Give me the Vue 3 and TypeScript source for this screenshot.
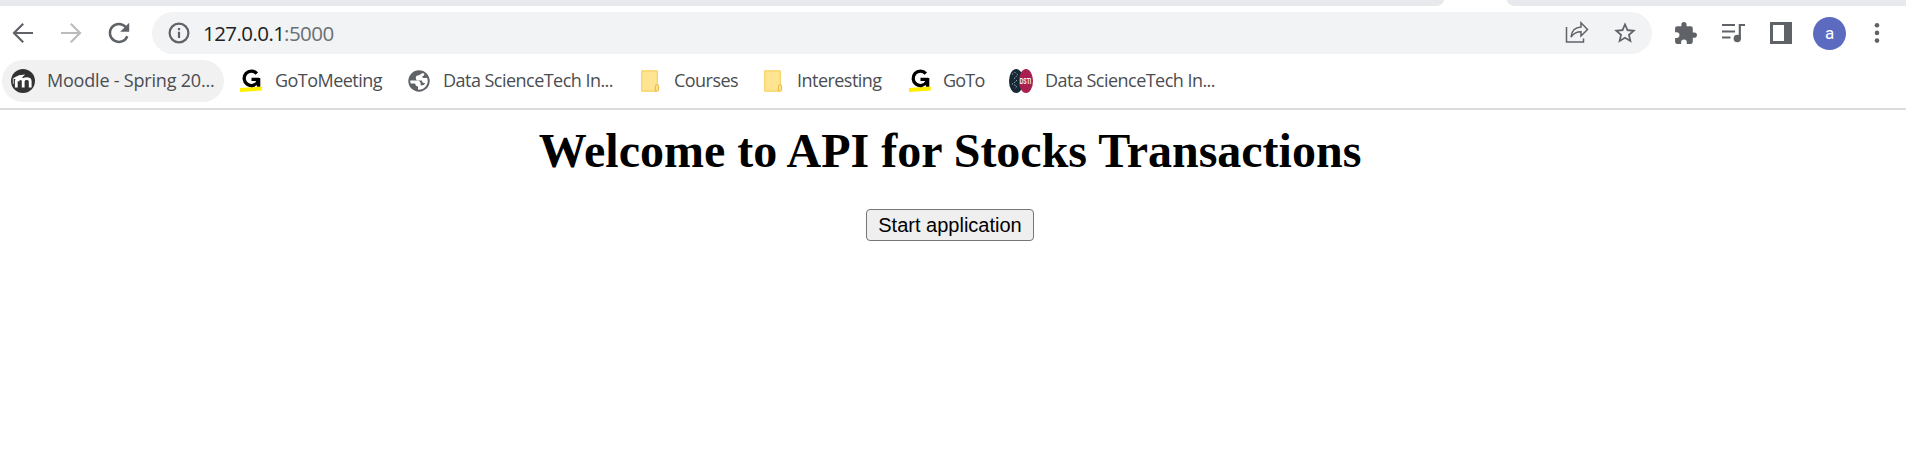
<script setup lang="ts">
interface Bookmark {
  label: string
  icon: 'moodle' | 'goto' | 'globe' | 'folder' | 'dsti'
  cls: string
}

const bookmarks: Bookmark[] = [
  { label: 'Moodle - Spring 20...', icon: 'moodle', cls: 'bm-moodle' },
  { label: 'GoToMeeting', icon: 'goto', cls: 'bm-meeting' },
  { label: 'Data ScienceTech In...', icon: 'globe', cls: 'bm-data' },
  { label: 'Courses', icon: 'folder', cls: 'bm-courses' },
  { label: 'Interesting', icon: 'folder', cls: 'bm-interesting' },
  { label: 'GoTo', icon: 'goto', cls: 'bm-goto' },
  { label: 'Data ScienceTech In...', icon: 'dsti', cls: 'bm-dsti' },
]
</script>

<template>
  <div class="window">
    <div class="tabstrip">
      <div class="tabs-left"></div>
      <div class="tabs-right"></div>
    </div>
    <header class="toolbar">
      <svg class="nav back" viewBox="0 0 24 24"><path d="M22 12H3.5M12.2 2.8 3 12l9.2 9.2" /></svg>
      <svg class="nav forward" viewBox="0 0 24 24"><path d="M2 12h18.500M11.800 2.800 21 12l-9.200 9.200" /></svg>
      <svg class="nav reload" viewBox="0 0 24 24">
        <path d="M20.300 15.200a9 9 0 1 1-1.600-9.200l2 2" />
        <path class="solid" d="M22.200 1.800v9h-9z" />
      </svg>
      <div class="omnibox">
        <svg class="info" viewBox="0 0 22 22">
          <circle cx="11" cy="11" r="9.400" />
          <path d="M11 9.800v6.200M11 6v2.300" />
        </svg>
        <div class="url"><span class="host">127.0.0.1</span><span class="port">:5000</span></div>
        <svg class="share" viewBox="0 0 24 24">
          <path d="M1.500 6v15h17v-3.500" />
          <path d="M6 16c.5-6 3.500-9.600 10-10V1.800L22.500 8.500 16 15v-4.300c-4.500 0-7.500 1.500-10 5.300z" />
        </svg>
        <svg class="star" viewBox="0 0 24 24">
          <path d="M22 9.240l-7.190-.62L12 2 9.190 8.630 2 9.240l5.460 4.730L5.820 21 12 17.270 18.180 21l-1.630-7.030L22 9.240zM12 15.400l-3.760 2.270 1-4.280-3.320-2.880 4.380-.38L12 6.100l1.710 4.040 4.380.38-3.320 2.880 1 4.280L12 15.400z" />
        </svg>
      </div>
      <svg class="puzzle" viewBox="0 0 24 24">
        <path d="M20.500 11H19V7c0-1.100-.9-2-2-2h-4V3.500a2.500 2.500 0 0 0-5 0V5H4c-1.100 0-2 .9-2 2v3.800h1.500a2.700 2.700 0 0 1 0 5.400H2V20c0 1.100.9 2 2 2h3.800v-1.500a2.700 2.700 0 0 1 5.400 0V22H17c1.100 0 2-.9 2-2v-4h1.500a2.500 2.500 0 0 0 0-5z" />
      </svg>
      <svg class="media" viewBox="0 0 24 20">
        <path d="M1 2h13M1 8.500h13M1 14.500h8.500M18.800 15.500V2H24" />
        <circle cx="16.300" cy="15.500" r="3.700" />
      </svg>
      <svg class="panel" viewBox="0 0 22 22">
        <path fill-rule="evenodd" d="M0 0h22v22H0zM3 3v16h11V3z" />
      </svg>
      <div class="avatar">a</div>
      <svg class="menu" viewBox="0 0 6 22">
        <circle cx="3" cy="3.200" r="2.300" /><circle cx="3" cy="10.900" r="2.300" /><circle cx="3" cy="18.600" r="2.300" />
      </svg>
    </header>
    <nav class="bookmarks">
      <div v-for="(b, i) in bookmarks" :key="i" class="bookmark" :class="b.cls">
        <svg v-if="b.icon === 'moodle'" class="ico" viewBox="0 0 24 24">
          <circle cx="12" cy="12" r="12" fill="#333" />
          <path d="M5.300 18.500v-6.200q0-2.200 2.500-2.200M7 12.300q0-2.600 2.600-2.600t2.600 2.600v6.200M12.200 12.300q.2-2.600 3.400-2.600 3.600 0 3.600 2.800v6" fill="none" stroke="#fff" stroke-width="2.800" />
          <path d="M1.500 9.500 8 6.200l6.200-.7-4.400 4.300L5 10.200z" fill="#fff" />
          <path d="M2.300 9.800v5" stroke="#fff" stroke-width=".8" />
        </svg>
        <svg v-else-if="b.icon === 'goto'" class="ico" viewBox="0 0 24 24">
          <path d="M1 18.900 22.800 17.600V21.600L1 23z" fill="#ffed00" />
          <path d="M17.800 4.600A7.200 7.200 0 1 0 18.600 13V10.400H12.500" fill="none" stroke="#000" stroke-width="3.300" />
          <path d="M17.900 9h3.400v8.700h-3.400z" fill="#000" />
        </svg>
        <svg v-else-if="b.icon === 'globe'" class="ico" viewBox="0 0 24 24">
          <circle cx="12" cy="12" r="10.700" fill="#5f6368" />
          <path d="M14.800 3.600c.6 2.300-1 3-3 3.200v2h3.800c1.800 0 1.800 2.600 3.800 2.600h1.100c.3 3.600-2 7.400-5.600 8.800-1.400.5-2.900.7-4.300.4v-2.300h2.300c1.500 0 2.200-1.300 2.200-3.400h-2c-2.500 0-2.600-3.200-4.700-3.200H3.500A8.700 8.700 0 0 1 8 4.300C10.100 3.200 12.500 3 14.800 3.600z" fill="none" />
          <path d="M15.600 3.900 12 6.300c-2.300.2-3.200 1-3.200 2.600 0 1.800 1.300 2.600 3.200 2.700h2.800c.6 2.400 1.900 2.700 3.400 2.400-1 2-2.500 2.400-4.500 2.400v-1.300c0-2.300-1.300-3.500-3.600-3.500H3.200c0 1 .2 1.900.5 2.800l4.300.1c.8 2.200 1.400 3 3 3v3.100c5.500.5 9.700-3.600 9.700-8.600 0-1.200-.2-2.300-.7-3.300-2 .9-4.800.2-5-1.200 1.300-.2 2.400-1 2.400-2.700z" fill="#fff" />
        </svg>
        <svg v-else-if="b.icon === 'folder'" class="ico" viewBox="0 0 24 24">
          <rect x="3.700" y="1.800" width="15.600" height="20.400" rx=".6" fill="#ffe591" stroke="#f7d263" stroke-width="1.200" />
          <path d="M17.400 21.600v-4.100q0-1.800 1.600-1.800t1.600 1.800v2.900q0 1.600-1.600 1.600h-1.600z" fill="#ffe591" stroke="#e9bd45" stroke-width="1.100" />
        </svg>
        <svg v-else class="ico" viewBox="0 0 24 24">
          <ellipse cx="7.200" cy="12" rx="7.200" ry="12" fill="#182936" />
          <path d="M3 5.500 6 3l3 3-4 3 3 3-5 3 5 2-2 3" fill="none" stroke="#aab4b9" stroke-width=".9" stroke-dasharray="1.500 1.700" />
          <ellipse cx="17" cy="12" rx="7" ry="12" fill="#a91f50" />
          <text transform="translate(10.800 15.200) scale(.58 1)" class="dsti-text">DSTI</text>
        </svg>
        <span class="label">{{ b.label }}</span>
      </div>
    </nav>
    <main class="page">
      <h1>Welcome to API for Stocks Transactions</h1>
      <button type="button">Start application</button>
    </main>
  </div>
</template>

<style>
html,
body {
  margin: 0;
  background: #fff;
  overflow: hidden;
}
</style>

<style scoped>
.window {
  width: 1906px;
  height: 468px;
  background: #fff;
  overflow: hidden;
  font-family: "Open Sans", "Noto Sans", sans-serif;
}
svg { display: block; flex: none; }
.tabstrip { display: flex; justify-content: space-between; height: 6px; }
.tabs-left { width: 1444px; background: #e8e9ed; border-bottom-right-radius: 9px 7px; }
.tabs-right { width: 399px; background: #e8e9ed; border-bottom-left-radius: 9px 7px; }
.toolbar {
  display: flex;
  align-items: center;
  height: 42px;
  padding: 6px 0 6px 11px;
}
.nav { width: 24px; height: 24px; fill: none; stroke: #5f6368; stroke-width: 2.2; }
.forward { margin-left: 24px; stroke: #babcbe; }
.reload { margin-left: 24px; stroke-width: 2.5; }
.reload .solid { fill: #5f6368; stroke: none; }
.omnibox {
  display: flex;
  align-items: center;
  box-sizing: border-box;
  width: 1500px;
  height: 42px;
  margin-left: 21px;
  padding: 0 14px 0 16px;
  border-radius: 21px;
  background: #f1f3f4;
}
.info { width: 22px; height: 22px; fill: none; stroke: #5f6368; stroke-width: 2.2; }
.url { display: flex; width: 150px; margin-left: 13px; font-size: 20.5px; line-height: 43px; white-space: nowrap; }
.host { width: 81px; color: #202124; letter-spacing: -0.55px; }
.port { color: #6b7075; letter-spacing: -0.5px; }
.share { width: 24px; height: 24px; margin-left: auto; fill: none; stroke: #5f6368; stroke-width: 1.5; }
.star { width: 26px; height: 26px; margin-left: 23px; fill: #5f6368; }
.puzzle { width: 25px; height: 25px; margin-left: 21px; fill: #5f6368; }
.media { width: 24px; height: 20px; margin-left: 23px; fill: none; stroke: #5f6368; stroke-width: 2.200; }
.media circle { fill: #5f6368; stroke: none; }
.panel { width: 22px; height: 22px; margin-left: 25px; fill: #5f6368; }
.avatar {
  width: 33px;
  height: 33px;
  margin-left: 21px;
  border-radius: 50%;
  background: #5c6bc0;
  color: #fff;
  font: 400 17px/32px Roboto, sans-serif;
  text-align: center;
}
.menu { width: 6px; height: 22px; margin-left: 28px; fill: #5f6368; }
.bookmarks { display: flex; height: 48px; border-bottom: 2px solid #dcdcdc; padding-left: 2px; }
.bookmark {
  display: flex;
  align-items: center;
  box-sizing: border-box;
  height: 42px;
  padding-left: 9px;
  border-radius: 21px;
}
.ico { width: 24px; height: 24px; }
.label {
  height: 42px;
  margin-left: 12px;
  font-size: 18px;
  line-height: 40px;
  color: #4a4d51;
  white-space: nowrap;
  letter-spacing: -0.53px;
}
.bm-moodle { width: 222px; background: #f1f1f1; }
.bm-moodle .label { letter-spacing: -0.2px; }
.bm-meeting { width: 174px; padding-left: 15px; }
.bm-data { width: 231px; }
.bm-courses { width: 123px; }
.bm-interesting { width: 147px; }
.bm-goto { width: 101px; }
.bm-goto .label { margin-left: 11px; letter-spacing: -0.8px; }
.bm-dsti { width: 220px; }
.dsti-text { font: 700 8.5px "Liberation Sans", sans-serif; fill: #fff; }
.page { display: flex; flex-direction: column; align-items: center; width: 1900px; }
h1 { margin: 13px 0 0; font: 700 48px/56px "Liberation Serif", serif; color: #000; white-space: nowrap; }
button {
  width: 168px;
  height: 32px;
  margin-top: 30px;
  padding: 0;
  border: 1px solid #767676;
  border-radius: 4px;
  background: #efefef;
  color: #000;
  font: 20px/28px "Liberation Sans", sans-serif;
  white-space: nowrap;
}
</style>
